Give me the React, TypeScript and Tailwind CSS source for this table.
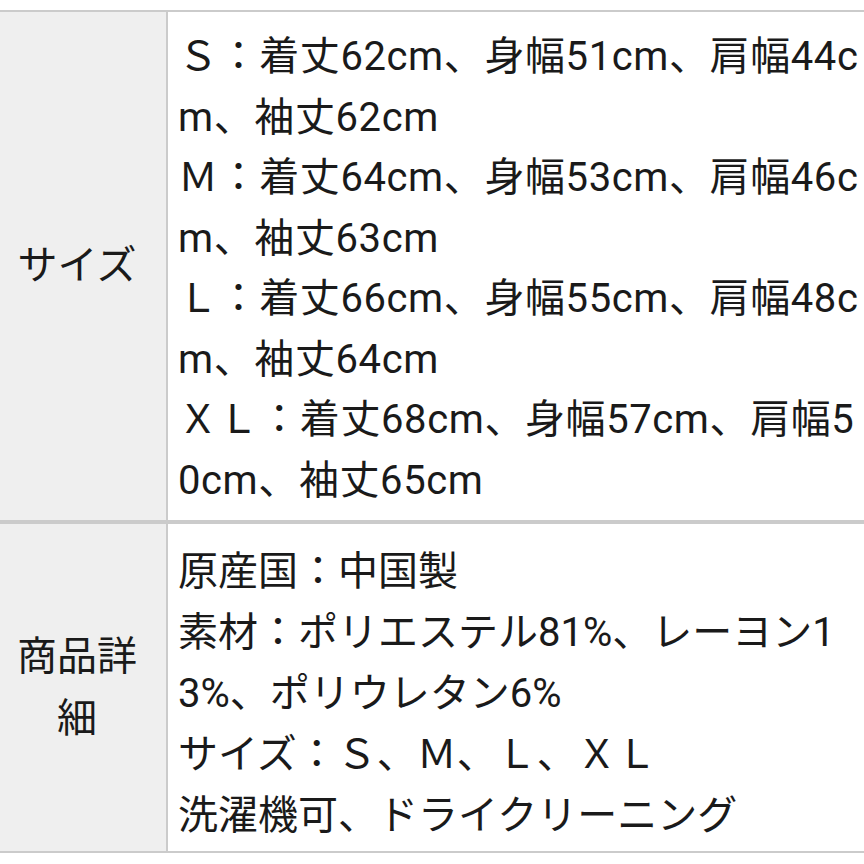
const FONT = "font-['Roboto','Noto_Sans_CJK_JP',sans-serif]";

const rows: { label: string[]; lines: string[]; pad: string }[] = [
  {
    label: ["サイズ"],
    lines: [
      "Ｓ：着丈62cm、身幅51cm、肩幅44c",
      "m、袖丈62cm",
      "Ｍ：着丈64cm、身幅53cm、肩幅46c",
      "m、袖丈63cm",
      "Ｌ：着丈66cm、身幅55cm、肩幅48c",
      "m、袖丈64cm",
      "ＸＬ：着丈68cm、身幅57cm、肩幅5",
      "0cm、袖丈65cm",
    ],
    pad: "pt-[15px] pb-[9px] leading-[60.5px] tracking-[0.6px]",
  },
  {
    label: ["商品詳", "細"],
    lines: [
      "原産国：中国製",
      "素材：ポリエステル81%、レーヨン1",
      "3%、ポリウレタン6%",
      "サイズ：Ｓ、Ｍ、Ｌ、ＸＬ",
      "洗濯機可、ドライクリーニング",
    ],
    pad: "pt-[17px] pb-[5px] leading-[61px]",
  },
];

export default function App() {
  return (
    <div className={`min-h-[864px] w-[864px] bg-white pt-[10px] text-[#1a1a1a] ${FONT}`}>
      <div className="border-y-2 border-[#cbcbcb]">
        {rows.map((row, i) => (
          <div
            key={i}
            className={`flex ${i > 0 ? "border-t-4 border-[#cbcbcb]" : ""}`}
          >
            <div className="flex w-[168px] shrink-0 flex-col items-center justify-center border-r-2 border-[#cbcbcb] bg-[#efefef] pl-[10px] pr-[22px] text-[40px] leading-[62px]">
              {row.label.map((l) => (
                <div key={l} className="whitespace-nowrap">
                  {l}
                </div>
              ))}
            </div>
            <div className={`flex-1 pl-[10px] text-[40px] ${row.pad}`}>
              {row.lines.map((l) => (
                <div key={l} className="whitespace-nowrap">
                  {l}
                </div>
              ))}
            </div>
          </div>
        ))}
      </div>
    </div>
  );
}
